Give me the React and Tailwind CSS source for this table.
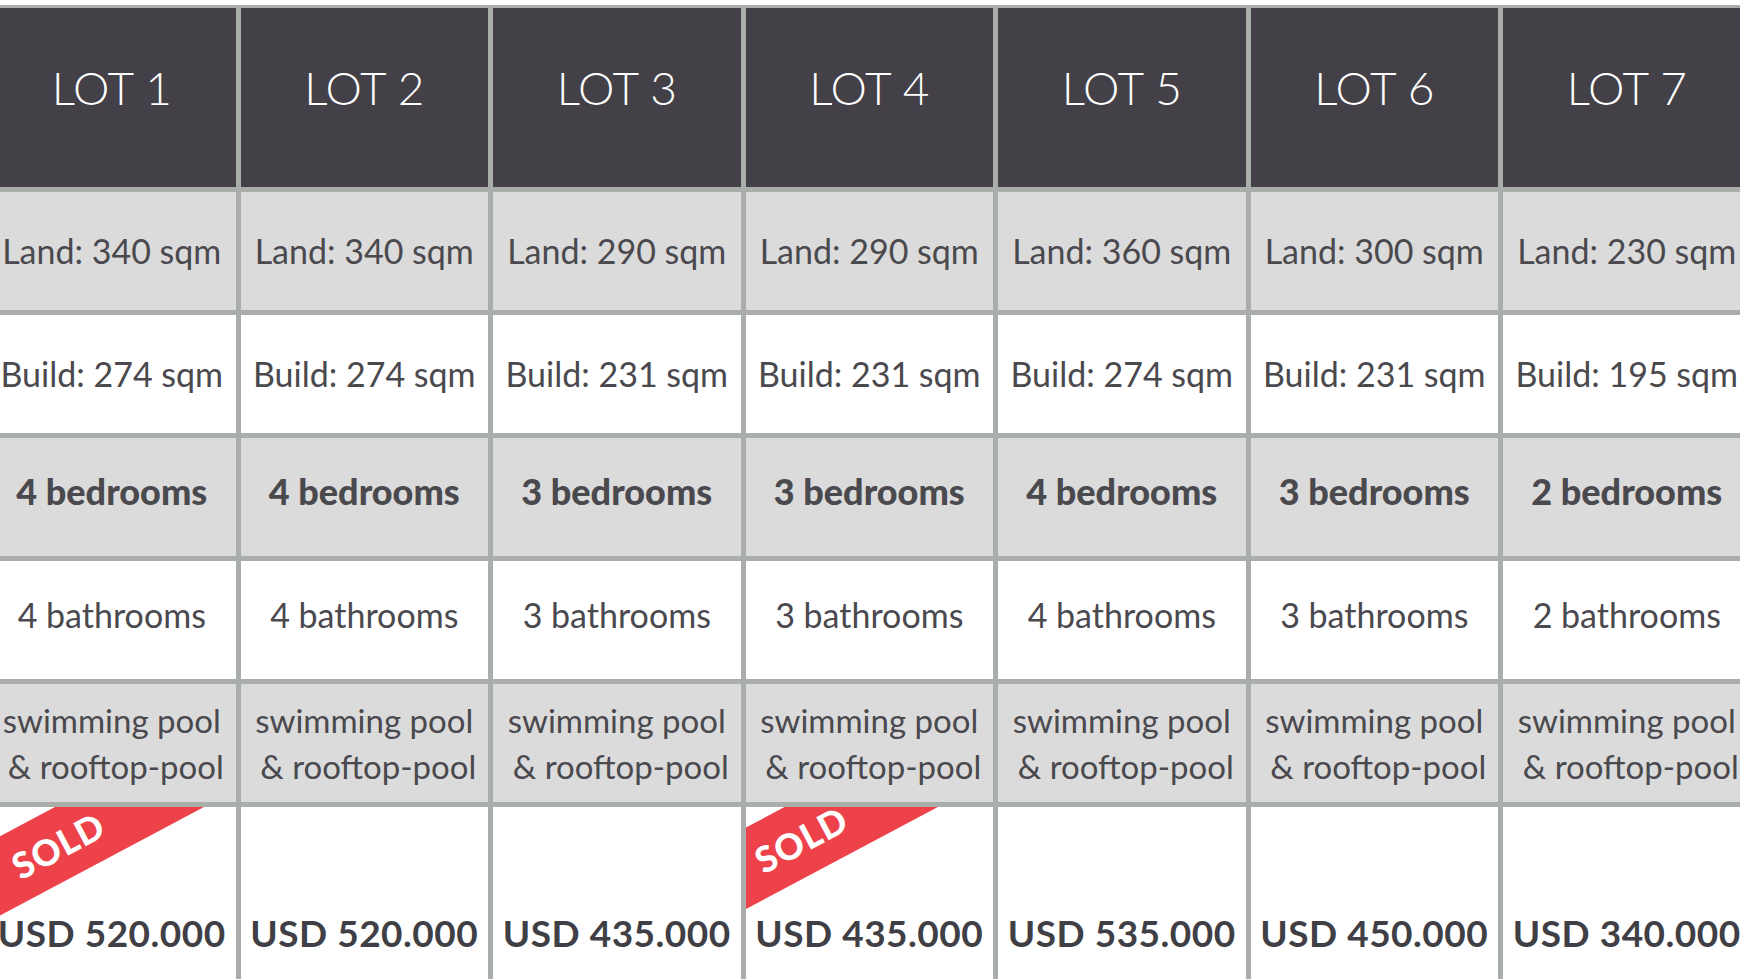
import React from "react";

const lots = [
  { n: 1, land: 340, build: 274, bed: 4, bath: 4, price: "520.000", sold: "a" },
  { n: 2, land: 340, build: 274, bed: 4, bath: 4, price: "520.000" },
  { n: 3, land: 290, build: 231, bed: 3, bath: 3, price: "435.000" },
  { n: 4, land: 290, build: 231, bed: 3, bath: 3, price: "435.000", sold: "b" },
  { n: 5, land: 360, build: 274, bed: 4, bath: 4, price: "535.000" },
  { n: 6, land: 300, build: 231, bed: 3, bath: 3, price: "450.000" },
  { n: 7, land: 230, build: 195, bed: 2, bath: 2, price: "340.000" },
];

const font = { fontFamily: "Lato, 'Noto Sans', sans-serif" };

function Sold({ variant }) {
  const pos =
    variant === "a"
      ? "left-[-130px] top-[3px] h-[70px]"
      : "left-[-145px] top-[-4px] h-[72px]";
  return (
    <div
      className={`absolute ${pos} w-[400px] bg-[#ee424a] -rotate-[28deg] flex items-center justify-center`}
    >
      <span className="text-white font-black text-[36px] leading-none tracking-[1px]">
        SOLD
      </span>
    </div>
  );
}

export default function App() {
  return (
    <div className="w-[1740px] h-[979px] overflow-hidden bg-white" style={font}>
      <div className="mt-[5px] ml-[-17px] w-max bg-[#aaaeab] px-[5px] pt-[3px] grid grid-cols-[repeat(7,247.5px)] gap-[5px] text-[#4a494e]">
        {lots.map((l) => (
          <div
            key={`h${l.n}`}
            className="h-[179px] bg-[#434047] flex items-center justify-center pb-[20px]"
          >
            <span className="text-white font-light text-[46px] leading-none">
              LOT {l.n}
            </span>
          </div>
        ))}
        {lots.map((l) => (
          <div
            key={`l${l.n}`}
            className="h-[118px] bg-[#dbdbdb] flex items-center justify-center"
          >
            <span className="text-[34px] leading-none">Land: {l.land} sqm</span>
          </div>
        ))}
        {lots.map((l) => (
          <div
            key={`b${l.n}`}
            className="h-[118px] bg-white flex items-center justify-center"
          >
            <span className="text-[34px] leading-none">Build: {l.build} sqm</span>
          </div>
        ))}
        {lots.map((l) => (
          <div
            key={`r${l.n}`}
            className="h-[118px] bg-[#dbdbdb] flex items-center justify-center pb-[12px]"
          >
            <span className="text-[36px] font-black leading-none">
              {l.bed} bedrooms
            </span>
          </div>
        ))}
        {lots.map((l) => (
          <div
            key={`t${l.n}`}
            className="h-[118px] bg-white flex items-center justify-center pb-[10px]"
          >
            <span className="text-[34px] leading-none">{l.bath} bathrooms</span>
          </div>
        ))}
        {lots.map((l) => (
          <div
            key={`p${l.n}`}
            className="h-[118px] bg-[#dbdbdb] flex items-center justify-center"
          >
            <span className="text-[33px] leading-[46px] text-center">
              swimming pool
              <br />
              <span className="pl-[8px]">&amp; rooftop-pool</span>
            </span>
          </div>
        ))}
        {lots.map((l) => (
          <div
            key={`u${l.n}`}
            className="h-[200px] bg-white relative overflow-hidden flex justify-center pt-[104px]"
          >
            {l.sold && <Sold variant={l.sold} />}
            <span className="relative text-[37px] font-bold leading-[44px] tracking-[0.5px] text-[#403f45]">
              USD {l.price}
            </span>
          </div>
        ))}
      </div>
    </div>
  );
}
